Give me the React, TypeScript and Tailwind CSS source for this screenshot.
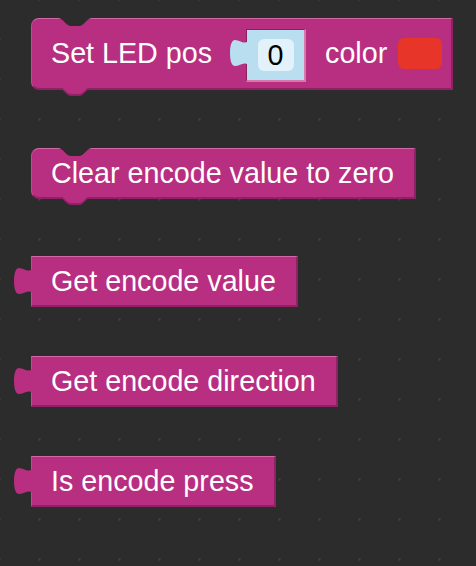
import React from "react";

const PINK = "#b82e80";
const BG = "#2c2c2c";

// notch cut into the top of a statement block
function TopNotch() {
  return (
    <svg className="absolute top-[-1px] left-[26px]" width="34" height="9" viewBox="0 0 34 9">
      <path d="M0,0 C5,0 8,8 13,8 L21,8 C26,8 29,0 34,0 Z" fill={BG} />
    </svg>
  );
}

// tab hanging below a statement block
function BottomTab() {
  return (
    <svg className="absolute top-[calc(100%-2px)] left-[26px]" width="34" height="12" viewBox="0 0 34 12">
      <path d="M0,2 C5,2 8,10 13,10 L21,10 C26,10 29,2 34,2 Z" fill="#8e2264" />
      <path d="M0,0 C5,0 8,8 13,8 L21,8 C26,8 29,0 34,0 Z" fill={PINK} />
    </svg>
  );
}

// puzzle tab on the left of a value block
function LeftTab({ color, className }: { color: string; className: string }) {
  return (
    <svg className={className} width="18" height="26" viewBox="0 0 18 26">
      <path
        d="M18,1 C14,5 10,0 5,0 C1.5,0 0,6 0,13 C0,20 1.5,26 5,26 C10,26 14,21 18,25 Z"
        fill={color}
      />
    </svg>
  );
}

function StatementBlock({ children, tall }: { children: React.ReactNode; tall?: boolean }) {
  return (
    <div
      className={`relative flex items-center ${
        tall ? "h-[72px]" : "h-[51px]"
      } bg-[#b82e80] rounded-l-[8px] border-t border-l border-t-[#cf68a4] border-l-[#c24a90] border-r-2 border-b-2 border-r-[#8e2264] border-b-[#8e2264] pl-[19px]`}
    >
      <TopNotch />
      {children}
      <BottomTab />
    </div>
  );
}

function ValueBlock({ label }: { label: string }) {
  return (
    <div className="relative flex items-center h-[51px] bg-[#b82e80] border-t border-l border-t-[#cf68a4] border-l-[#c24a90] border-r-2 border-b-2 border-r-[#8e2264] border-b-[#8e2264] pl-[19px] pr-[20px]">
      <LeftTab color={PINK} className="absolute left-[-18px] top-[11px]" />
      <span className="text-white text-[28.7px] leading-none">{label}</span>
    </div>
  );
}

export default function App() {
  return (
    <div className="w-[476px] h-[566px] overflow-hidden bg-[#2c2c2c] bg-[radial-gradient(circle,#444444_1.1px,transparent_1.4px)] bg-size-[40px_40px] bg-position-[19.5px_19.5px] flex flex-col items-start pl-[31px] pt-[18px] font-['Liberation_Sans',Arial,sans-serif]">
      <StatementBlock tall>
        <span className="text-white text-[28.7px] leading-none">Set LED pos</span>
        <div className="relative ml-[34px] mt-1 w-[60px] h-[53px] bg-[#b8def0] border-t border-l border-t-[#8a1f5f] border-l-[#8a1f5f] border-r-2 border-b-2 border-r-[#d67aae] border-b-[#d67aae] flex items-center justify-center">
          <LeftTab color="#b8def0" className="absolute left-[-17px] top-[10px]" />
          <div className="w-[36px] h-[32px] rounded-[6px] bg-[#e2f1fa] flex items-center justify-center text-black text-[28.7px] leading-none">
            0
          </div>
        </div>
        <span className="ml-[19px] text-white text-[28.7px] leading-none">color</span>
        <div className="ml-[11px] mr-[9px] w-[44px] h-[31px] rounded-[6px] bg-[#e8352a]" />
      </StatementBlock>

      <div className="mt-[58px]">
        <StatementBlock>
          <span className="text-white text-[28.7px] leading-none pr-[20px]">
            Clear encode value to zero
          </span>
        </StatementBlock>
      </div>

      <div className="mt-[57px]">
        <ValueBlock label="Get encode value" />
      </div>
      <div className="mt-[49px]">
        <ValueBlock label="Get encode direction" />
      </div>
      <div className="mt-[49px]">
        <ValueBlock label="Is encode press" />
      </div>
    </div>
  );
}
